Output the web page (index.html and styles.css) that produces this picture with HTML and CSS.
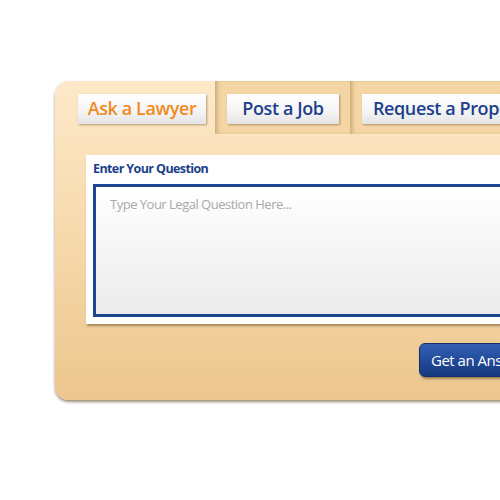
FILE: index.html
```html
<!DOCTYPE html>
<html>
<head>
<meta charset="utf-8">
<link rel="stylesheet" href="styles.css">
</head>
<body>
<div class="panel">
  <div class="tabs">
    <div class="tab tab-active"><span class="tab-btn btn-ask">Ask a Lawyer</span></div>
    <div class="tab"><span class="tab-btn btn-job">Post a Job</span></div>
    <div class="tab tab-wide"><span class="tab-btn btn-req">Request a Proposal</span></div>
  </div>
  <div class="card">
    <div class="card-label">Enter Your Question</div>
    <div class="question">Type Your Legal Question Here...</div>
  </div>
  <div class="actions">
    <span class="answer-btn">Get an Answer</span>
  </div>
</div>
</body>
</html>
```

FILE: styles.css
```css
html, body {
  margin: 0;
  padding: 0;
  overflow: hidden;
  background: #ffffff;
  font-family: "Open Sans", "Liberation Sans", sans-serif;
}

body {
  width: 500px;
  height: 500px;
  padding-top: 81px;
  box-sizing: border-box;
}

.panel {
  margin-left: 55px;
  width: 640px;
  height: 319px;
  border-radius: 14px;
  background: linear-gradient(to bottom, #fde9c9 0%, #f8dcb1 40%, #ecc68d 100%);
  box-shadow: 0 2px 3px rgba(70, 45, 10, 0.55);
  overflow: hidden;
}

.tabs {
  display: flex;
  height: 53px;
}

.tab {
  width: 135px;
  box-sizing: border-box;
  padding: 13px 0 0 12px;
  background: #f3d6a4;
  box-shadow: inset 4px 0 4px -2px rgba(120, 80, 20, 0.35);
}

.tab-active {
  width: 160px;
  padding-left: 23px;
  background: transparent;
  box-shadow: none;
}

.tab-wide {
  width: 300px;
}

.tab-btn {
  display: inline-block;
  height: 30px;
  line-height: 29px;
  box-sizing: border-box;
  text-align: center;
  font-size: 18px;
  font-weight: 600;
  letter-spacing: -0.4px;
  color: #1b3f8b;
  background: linear-gradient(to bottom, #ffffff 0%, #f4f4f4 60%, #e4e4e4 100%);
  box-shadow: 1px 1px 2px rgba(90, 60, 20, 0.45);
}

.btn-ask {
  width: 128px;
  color: #f08a1d;
}

.btn-job {
  width: 112px;
}

.btn-req {
  width: 200px;
  text-align: left;
  padding-left: 11px;
}

.card {
  margin: 21px 0 0 31px;
  padding: 0 7px 7px 7px;
  background: #ffffff;
  box-shadow: 1px 2px 2px rgba(90, 60, 20, 0.5);
}

.card-label {
  height: 29px;
  line-height: 28px;
  font-size: 12.5px;
  font-weight: 700;
  letter-spacing: -0.6px;
  color: #1b3f8b;
}

.question {
  height: 133px;
  box-sizing: border-box;
  border: 3px solid #1d4691;
  padding: 8px 14px;
  font-size: 13px;
  letter-spacing: -0.5px;
  color: #a9a9a9;
  background: linear-gradient(to bottom, #ffffff 0%, #f5f5f5 50%, #ebebeb 100%);
}

.actions {
  display: flex;
  padding: 19px 0 0 364px;
}

.answer-btn {
  display: inline-block;
  height: 34px;
  line-height: 33px;
  padding: 0 14px 0 11px;
  border-radius: 6px;
  font-size: 15px;
  letter-spacing: -0.5px;
  color: #ffffff;
  background: linear-gradient(to bottom, #3560b2 0%, #224b9a 50%, #173a80 100%);
  border: 1px solid #14306c;
  box-sizing: border-box;
  box-shadow: 1px 2px 2px rgba(70, 45, 10, 0.45);
}
```
